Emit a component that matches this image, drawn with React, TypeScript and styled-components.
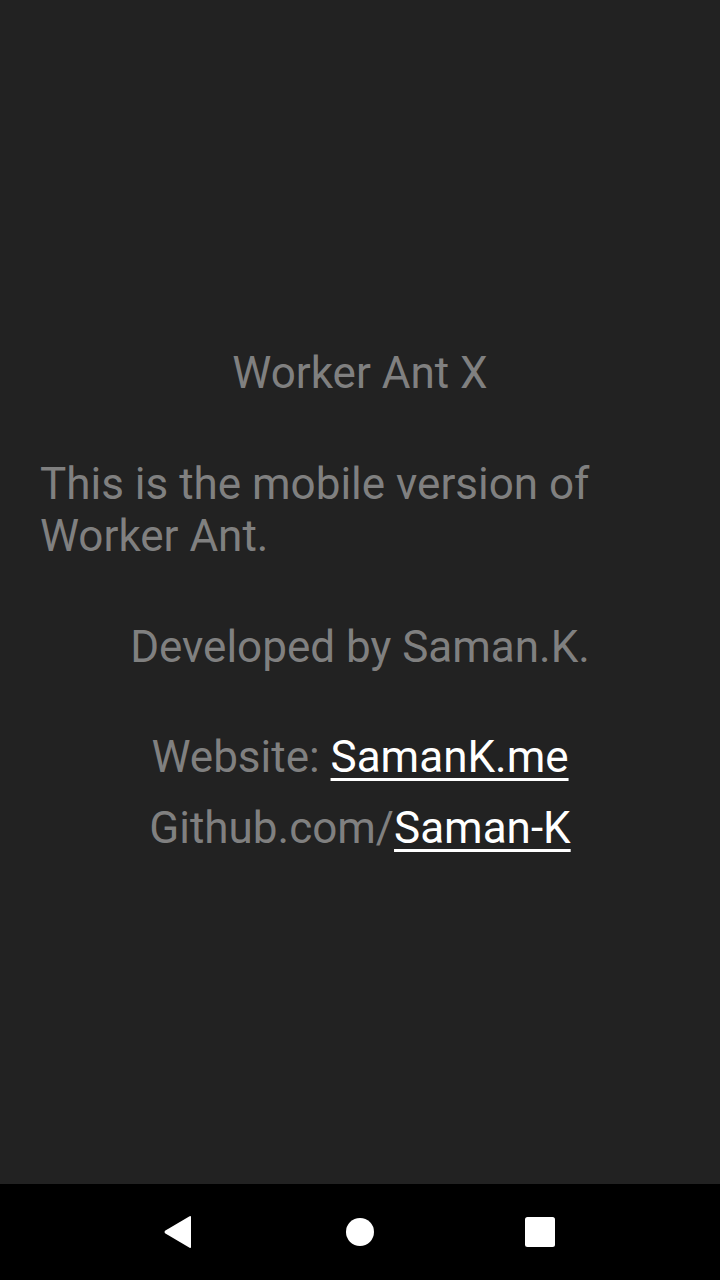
import React from "react";
import styled, { createGlobalStyle } from "styled-components";

const GlobalStyle = createGlobalStyle`
  html, body { margin: 0; padding: 0; background: #222222; }
  body { font-family: Roboto, "Noto Sans", sans-serif; }
`;

const Screen = styled.div`
  width: 720px;
  height: 1280px;
  display: flex;
  flex-direction: column;
  background: #222222;
  overflow: hidden;
`;

const Main = styled.main`
  flex: 1;
  display: flex;
  flex-direction: column;
  padding: 347px 40px 0;
  box-sizing: border-box;
`;

const Text = styled.p<{ $align?: "left" | "center"; $gap?: number }>`
  margin: ${(p) => p.$gap ?? 0}px 0 0;
  font-size: 44px;
  line-height: 52px;
  color: #808080;
  text-align: ${(p) => p.$align ?? "center"};
`;

const Link = styled.a`
  color: #ffffff;
  text-decoration: underline;
  text-decoration-thickness: 3px;
  text-underline-offset: 6px;
`;

const NavBar = styled.nav`
  height: 96px;
  background: #000000;
  display: flex;
  align-items: center;
  justify-content: center;
  gap: 84px;
`;

const NavButton = styled.div`
  width: 96px;
  height: 96px;
  display: flex;
  align-items: center;
  justify-content: center;
`;

export default function App() {
  return (
    <>
      <GlobalStyle />
      <Screen>
        <Main>
          <Text>Worker Ant X</Text>
          <Text $align="left" $gap={59}>
            This is the mobile version of Worker Ant.
          </Text>
          <Text $gap={59}>Developed by Saman.K.</Text>
          <Text $gap={58}>
            Website: <Link href="#">SamanK.me</Link>
          </Text>
          <Text $gap={19}>
            Github.com/<Link href="#">Saman-K</Link>
          </Text>
        </Main>
        <NavBar>
          <NavButton>
            <svg width="32" height="34" viewBox="0 0 32 34" style={{ marginLeft: -4 }}>
              <path d="M29 2 L29 32 Q29 33.5 27.6 32.8 L3 18.2 Q2 17 3 15.8 L27.6 1.2 Q29 0.5 29 2 Z" fill="#fff" />
            </svg>
          </NavButton>
          <NavButton>
            <svg width="28" height="28" viewBox="0 0 28 28">
              <circle cx="14" cy="14" r="14" fill="#fff" />
            </svg>
          </NavButton>
          <NavButton>
            <svg width="30" height="30" viewBox="0 0 30 30">
              <rect x="0" y="0" width="30" height="30" rx="2.5" fill="#fff" />
            </svg>
          </NavButton>
        </NavBar>
      </Screen>
    </>
  );
}
